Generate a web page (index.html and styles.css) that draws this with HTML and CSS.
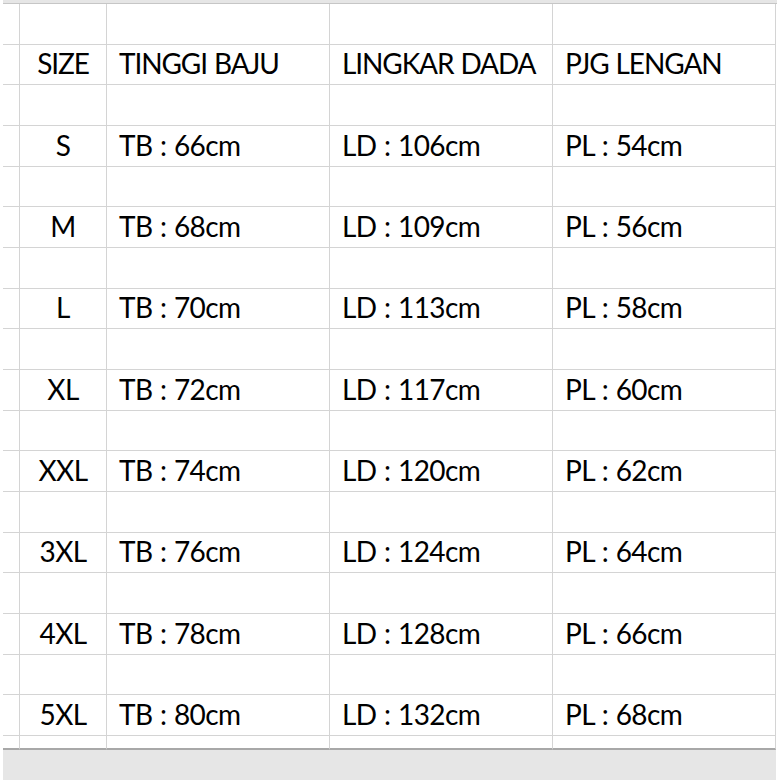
FILE: index.html
```html
<!DOCTYPE html>
<html>
<head>
<meta charset="utf-8">
<link rel="stylesheet" href="styles.css">
</head>
<body>
<div class="page">
  <div class="topband"></div>
  <div class="sheet">
    <div class="c c0"></div><div class="c c1"></div><div class="c"></div><div class="c"></div><div class="c"></div>
    <div class="c c0"></div><div class="c c1 head">SIZE</div><div class="c head">TINGGI BAJU</div><div class="c head">LINGKAR DADA</div><div class="c head">PJG LENGAN</div>
    <div class="c c0"></div><div class="c c1"></div><div class="c"></div><div class="c"></div><div class="c"></div>
    <div class="c c0"></div><div class="c c1">S</div><div class="c">TB : 66cm</div><div class="c">LD : 106cm</div><div class="c">PL : 54cm</div>
    <div class="c c0"></div><div class="c c1"></div><div class="c"></div><div class="c"></div><div class="c"></div>
    <div class="c c0"></div><div class="c c1">M</div><div class="c">TB : 68cm</div><div class="c">LD : 109cm</div><div class="c">PL : 56cm</div>
    <div class="c c0"></div><div class="c c1"></div><div class="c"></div><div class="c"></div><div class="c"></div>
    <div class="c c0"></div><div class="c c1">L</div><div class="c">TB : 70cm</div><div class="c">LD : 113cm</div><div class="c">PL : 58cm</div>
    <div class="c c0"></div><div class="c c1"></div><div class="c"></div><div class="c"></div><div class="c"></div>
    <div class="c c0"></div><div class="c c1">XL</div><div class="c">TB : 72cm</div><div class="c">LD : 117cm</div><div class="c">PL : 60cm</div>
    <div class="c c0"></div><div class="c c1"></div><div class="c"></div><div class="c"></div><div class="c"></div>
    <div class="c c0"></div><div class="c c1">XXL</div><div class="c">TB : 74cm</div><div class="c">LD : 120cm</div><div class="c">PL : 62cm</div>
    <div class="c c0"></div><div class="c c1"></div><div class="c"></div><div class="c"></div><div class="c"></div>
    <div class="c c0"></div><div class="c c1">3XL</div><div class="c">TB : 76cm</div><div class="c">LD : 124cm</div><div class="c">PL : 64cm</div>
    <div class="c c0"></div><div class="c c1"></div><div class="c"></div><div class="c"></div><div class="c"></div>
    <div class="c c0"></div><div class="c c1">4XL</div><div class="c">TB : 78cm</div><div class="c">LD : 128cm</div><div class="c">PL : 66cm</div>
    <div class="c c0"></div><div class="c c1"></div><div class="c"></div><div class="c"></div><div class="c"></div>
    <div class="c c0"></div><div class="c c1">5XL</div><div class="c">TB : 80cm</div><div class="c">LD : 132cm</div><div class="c">PL : 68cm</div>
    <div class="c c0 last"></div><div class="c c1 last"></div><div class="c last"></div><div class="c last"></div><div class="c last"></div>
  </div>
  <div class="footer"></div>
</div>
</body>
</html>
```

FILE: styles.css
```css
html, body {
  margin: 0;
  padding: 0;
  background: #ffffff;
}
.page {
  width: 780px;
  height: 780px;
  overflow: hidden;
  padding: 0 3px;
  box-sizing: border-box;
  display: flex;
  flex-direction: column;
}
.topband {
  height: 4px;
  background: #e6e6e6;
  border-bottom: 1px solid #c6c6c6;
  box-sizing: border-box;
}
.sheet {
  display: grid;
  grid-template-columns: 17px 87px 223px 223px 223px;
  grid-template-rows: repeat(18, 40.667px) 14px;
  width: 773px;
  font-family: "Lato", "Liberation Sans", sans-serif;
  font-size: 28px;
  letter-spacing: -0.6px;
  word-spacing: 1px;
  color: #000;
}
.c {
  border-right: 1px solid #d4d4d4;
  border-bottom: 1px solid #d4d4d4;
  display: flex;
  align-items: flex-end;
  padding: 0 0 7px 12px;
  white-space: nowrap;
  line-height: 1;
  box-sizing: border-box;
}
.head {
  letter-spacing: -1.1px;
}
.c0 {
  padding: 0;
}
.c1 {
  padding: 0 0 7px 0;
  justify-content: center;
}
.c.last {
  border-bottom: 2px solid #a8a8a8;
}
.footer {
  flex: 1;
  background: #e6e6e6;
  width: 773px;
}
```
